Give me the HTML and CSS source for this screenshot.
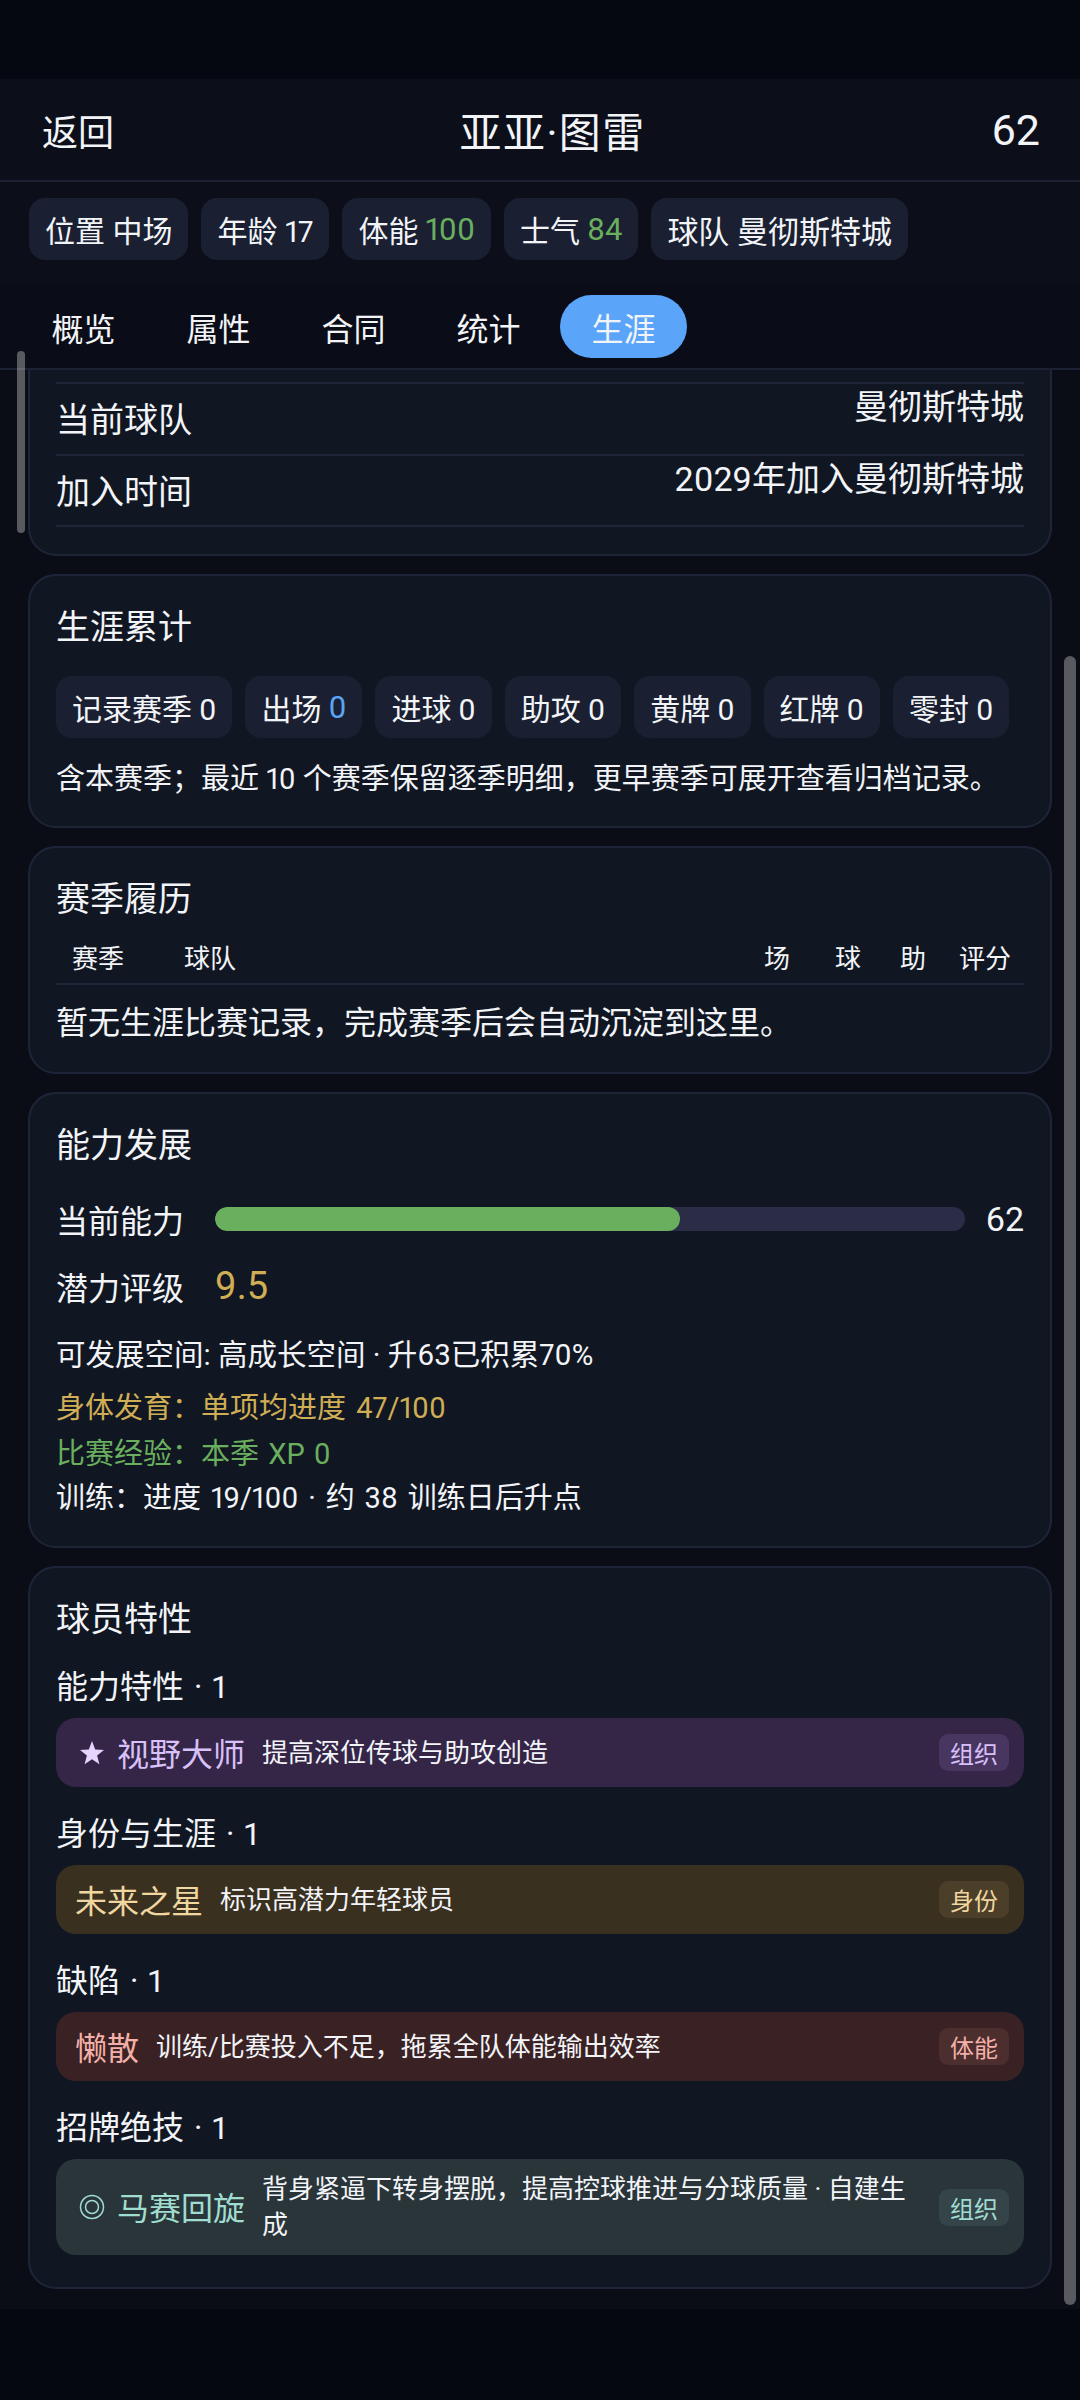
FILE: index.html
```html
<!DOCTYPE html>
<html lang="zh-CN">
<head>
    <meta charset="UTF-8">
    <meta name="viewport" content="width=device-width, initial-scale=1.0">
    <title>球员详情</title>
    <link rel="stylesheet" href="styles.css">
</head>
<body>
    <div class="safe-top"></div>

    <div class="screen">
        <header class="topbar">
            <span class="back">返回</span>
            <span class="player-name">亚亚·图雷</span>
            <span class="overall">62</span>
        </header>

        <div class="chips player-chips">
            <span class="chip">位置 中场</span>
            <span class="chip">年龄 17</span>
            <span class="chip">体能 <b class="green">100</b></span>
            <span class="chip">士气 <b class="green">84</b></span>
            <span class="chip chip-team">球队 曼彻斯特城</span>
        </div>

        <nav class="tabs">
            <span class="tab">概览</span>
            <span class="tab">属性</span>
            <span class="tab">合同</span>
            <span class="tab">统计</span>
            <span class="tab active">生涯</span>
        </nav>

        <main class="content">
            <section class="card card-clipped">
                <div class="info-row">
                    <span class="info-label">当前球队</span>
                    <span class="info-value">曼彻斯特城</span>
                </div>
                <div class="info-row">
                    <span class="info-label">加入时间</span>
                    <span class="info-value">2029年加入曼彻斯特城</span>
                </div>
            </section>

            <section class="card">
                <h2>生涯累计</h2>
                <div class="chips stat-chips">
                    <span class="chip">记录赛季 0</span>
                    <span class="chip">出场 <b class="blue">0</b></span>
                    <span class="chip">进球 0</span>
                    <span class="chip">助攻 0</span>
                    <span class="chip">黄牌 0</span>
                    <span class="chip">红牌 0</span>
                    <span class="chip">零封 0</span>
                </div>
                <p class="note">含本赛季；最近 10 个赛季保留逐季明细，更早赛季可展开查看归档记录。</p>
            </section>

            <section class="card">
                <h2>赛季履历</h2>
                <div class="history-head">
                    <span class="col-season">赛季</span>
                    <span class="col-team">球队</span>
                    <span class="col-games">场</span>
                    <span class="col-goals">球</span>
                    <span class="col-assists">助</span>
                    <span class="col-rating">评分</span>
                </div>
                <p class="empty">暂无生涯比赛记录，完成赛季后会自动沉淀到这里。</p>
            </section>

            <section class="card">
                <h2>能力发展</h2>
                <div class="ability-row">
                    <span class="ability-label">当前能力</span>
                    <div class="bar"><div class="bar-fill" style="width: 62%"></div></div>
                    <span class="ability-value">62</span>
                </div>
                <div class="ability-row potential-row">
                    <span class="ability-label">潜力评级</span>
                    <span class="potential">9.5</span>
                </div>
                <p class="growth growth-first">可发展空间: 高成长空间 · 升63已积累70%</p>
                <p class="growth growth-body gold">身体发育：单项均进度 47/100</p>
                <p class="growth growth-xp green">比赛经验：本季 XP 0</p>
                <p class="growth growth-train">训练：进度 19/100 · 约 38 训练日后升点</p>
            </section>

            <section class="card card-traits">
                <h2>球员特性</h2>

                <h3>能力特性 · 1</h3>
                <div class="trait trait-purple">
                    <svg class="trait-icon" viewBox="0 0 26 26"><polygon points="13,1 16.2,9.4 25,9.9 18.1,15.5 20.4,24.2 13,19.3 5.6,24.2 7.9,15.5 1,9.9 9.8,9.4" fill="#e6d4ff"/></svg>
                    <span class="trait-name">视野大师</span>
                    <span class="trait-desc">提高深位传球与助攻创造</span>
                    <span class="trait-tag">组织</span>
                </div>

                <h3>身份与生涯 · 1</h3>
                <div class="trait trait-gold">
                    <span class="trait-name">未来之星</span>
                    <span class="trait-desc">标识高潜力年轻球员</span>
                    <span class="trait-tag">身份</span>
                </div>

                <h3>缺陷 · 1</h3>
                <div class="trait trait-red">
                    <span class="trait-name">懒散</span>
                    <span class="trait-desc">训练/比赛投入不足，拖累全队体能输出效率</span>
                    <span class="trait-tag">体能</span>
                </div>

                <h3>招牌绝技 · 1</h3>
                <div class="trait trait-teal">
                    <svg class="trait-icon" viewBox="0 0 26 26" fill="none" stroke="#a0dcd0" stroke-width="1.5"><circle cx="13" cy="13" r="11.5"/><circle cx="13" cy="13" r="6.5"/></svg>
                    <span class="trait-name">马赛回旋</span>
                    <span class="trait-desc">背身紧逼下转身摆脱，提高控球推进与分球质量 · 自建生成</span>
                    <span class="trait-tag">组织</span>
                </div>
            </section>
        </main>

        <div class="scroll-thumb thumb-left"></div>
        <div class="scroll-thumb thumb-right"></div>
    </div>

    <div class="safe-bottom"></div>
</body>
</html>
```

FILE: styles.css
```css
* {
    box-sizing: border-box;
}

html, body {
    margin: 0;
    height: 2400px;
    overflow: hidden;
}

body {
    display: flex;
    flex-direction: column;
    background: #050711;
    color: #f2f4f8;
    font-family: Roboto, "Noto Sans CJK SC", sans-serif;
    font-variant-numeric: proportional-nums;
}

b {
    font-weight: 400;
}

h2, h3, p {
    margin: 0;
    font-weight: 400;
}

.safe-top {
    height: 79px;
    flex: none;
}

.safe-bottom {
    height: 91px;
    flex: none;
}

.screen {
    position: relative;
    flex: 1;
    min-height: 0;
    display: flex;
    flex-direction: column;
    background: #0a0d16;
    overflow: hidden;
}

.topbar {
    height: 103px;
    flex: none;
    display: flex;
    justify-content: space-between;
    align-items: center;
    padding: 0 40px 0 42px;
    background: #0c0f1a;
    border-bottom: 2px solid #1c2233;
}

.back {
    font-size: 36px;
}

.player-name {
    font-size: 42px;
    letter-spacing: 1.5px;
}

.overall {
    font-size: 43px;
}

.chips {
    display: flex;
    gap: 13px;
}

.chip {
    height: 62px;
    padding: 0 16px;
    display: flex;
    align-items: center;
    gap: 7px;
    white-space: nowrap;
    font-size: 30px;
    background: #1a2031;
    border-radius: 16px;
}

.chip b {
    font-size: 31px;
}

.chip-team {
    font-size: 31px;
}

.player-chips {
    flex: none;
    height: 102px;
    padding: 16px 29px 0;
    background: #0c0f1a;
}

.green {
    color: #6aaf5e;
}

.blue {
    color: #5aa5f5;
}

.gold {
    color: #d0ae55;
}

.tabs {
    flex: none;
    height: 86px;
    display: flex;
    gap: 8px;
    padding: 11px 20px 0;
    background: #0a0d17;
    border-bottom: 2px solid #1c2233;
}

.tab {
    width: 127px;
    height: 63px;
    display: flex;
    align-items: center;
    justify-content: center;
    font-size: 32px;
    border-radius: 32px;
}

.tab.active {
    background: #5aa5fa;
}

.content {
    flex: 1;
    min-height: 0;
    display: flex;
    flex-direction: column;
    gap: 18px;
    padding: 0 28px;
    overflow: hidden;
}

.card {
    flex: none;
    padding: 28px 26px 26px;
    background: #111722;
    border: 2px solid #1f2539;
    border-radius: 28px;
}

.card h2 {
    font-size: 34px;
    line-height: 46px;
}

.card-clipped {
    height: 186px;
    padding-top: 12px;
    border-top: 0;
    border-radius: 0 0 28px 28px;
}

.info-row {
    height: 72px;
    display: flex;
    justify-content: space-between;
    border-top: 2px solid #1f2539;
}

.info-row:last-child {
    height: 73px;
    border-bottom: 2px solid #1f2539;
}

.info-label {
    font-size: 34px;
    line-height: 46px;
    padding-top: 13px;
}

.info-value {
    font-size: 34px;
    line-height: 46px;
}

.stat-chips {
    margin-top: 26px;
    word-spacing: -0.5px;
}

.note {
    margin-top: 20px;
    font-size: 29px;
    line-height: 42px;
}

.history-head {
    box-sizing: content-box;
    height: 42px;
    margin-top: 13px;
    padding: 0 15px 6px 16px;
    display: flex;
    align-items: center;
    font-size: 26px;
    border-bottom: 2px solid #1f2539;
}

.col-season {
    width: 112px;
}

.col-team {
    flex: 1;
}

.col-games {
    width: 71px;
}

.col-goals {
    width: 65px;
}

.col-assists {
    width: 59px;
}

.col-rating {
    width: 50px;
    white-space: nowrap;
}

.empty {
    margin-top: 15px;
    font-size: 32px;
    line-height: 46px;
}

.ability-row {
    display: flex;
    align-items: center;
    gap: 31px;
    height: 46px;
    margin-top: 28px;
    font-size: 32px;
}

.bar {
    flex: 1;
    height: 24px;
    background: #2a2d45;
    border-radius: 12px;
    overflow: hidden;
}

.bar-fill {
    height: 100%;
    background: #6aaf5e;
    border-radius: 12px;
}

.ability-value {
    margin-left: -11px;
    font-size: 34px;
}

.potential-row {
    margin-top: 21px;
}

.potential {
    font-size: 38px;
    color: #d0ae55;
}

.growth {
    font-size: 29px;
    line-height: 44px;
}

.growth-first {
    margin-top: 24px;
    font-size: 29.5px;
}

.growth-body {
    margin-top: 9px;
    word-spacing: 3px;
}

.growth-xp {
    margin-top: 2px;
    word-spacing: 2px;
}

.growth-train {
    word-spacing: 2.7px;
}

.card h3 {
    margin-top: 24px;
    font-size: 32px;
    line-height: 46px;
    word-spacing: 2px;
}

.card h2 + h3 {
    margin-top: 22px;
}

.card-traits {
    padding-bottom: 32px;
}

.trait {
    margin-top: 8px;
    min-height: 69px;
    display: flex;
    align-items: center;
    gap: 17px;
    padding: 12px 15px 12px 19px;
    border-radius: 20px;
}

.trait-icon {
    flex: none;
    width: 26px;
    height: 26px;
    margin: 0 -5px 0 4px;
}

.trait-name {
    flex: none;
    padding-bottom: 2px;
    font-family: "Noto Sans CJK SC", sans-serif;
    font-size: 32px;
    line-height: 42px;
    white-space: nowrap;
}

.trait-desc {
    flex: 1;
    font-size: 26px;
    line-height: 36px;
}

.trait-tag {
    flex: none;
    height: 37px;
    padding: 0 11px;
    display: flex;
    align-items: center;
    font-family: "Noto Sans CJK SC", sans-serif;
    font-size: 24px;
    border-radius: 9px;
}

.trait-purple {
    background: #352648;
}

.trait-purple .trait-name,
.trait-purple .trait-tag {
    color: #d8c0f8;
}

.trait-purple .trait-tag {
    background: #483560;
}

.trait-gold {
    background: #3a3020;
}

.trait-gold .trait-name,
.trait-gold .trait-tag {
    color: #f0d7a0;
}

.trait-gold .trait-tag {
    background: #4c3f2a;
}

.trait-red {
    background: #3a2224;
}

.trait-red .trait-name,
.trait-red .trait-tag {
    color: #f4b0a8;
}

.trait-red .trait-tag {
    background: #4c2e2e;
}

.trait-teal {
    background: #293538;
}

.trait-teal .trait-name,
.trait-teal .trait-tag {
    color: #a0dcd0;
}

.trait-teal .trait-tag {
    background: #354448;
}

.scroll-thumb {
    position: absolute;
    border-radius: 6px;
    background: rgba(255, 255, 255, 0.32);
}

.thumb-left {
    left: 17px;
    top: 272px;
    width: 8px;
    height: 182px;
}

.thumb-right {
    right: 4px;
    top: 577px;
    width: 12px;
    height: 1649px;
}
```
